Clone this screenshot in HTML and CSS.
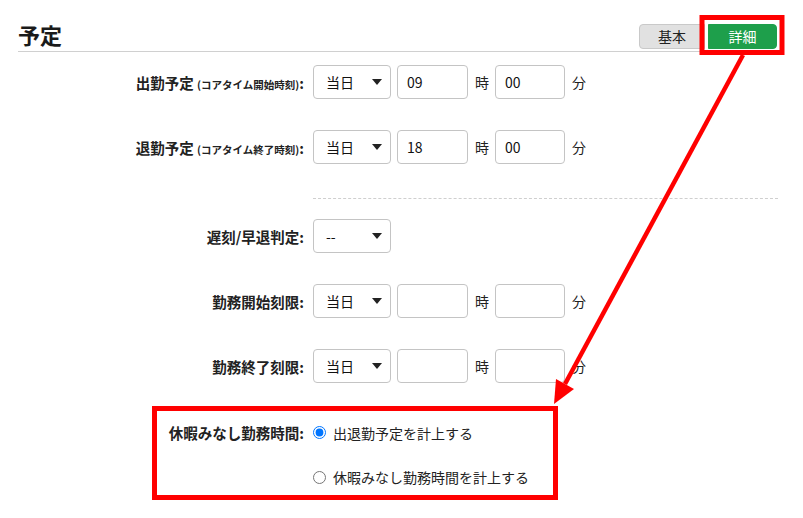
FILE: index.html
```html
<!DOCTYPE html>
<html lang="ja">
<head>
<meta charset="utf-8">
<link rel="stylesheet" href="styles.css">
</head>
<body>
<div class="page">
  <div class="header">
    <h1 class="title">予定</h1>
    <div class="toggle">
      <button class="tbtn tbtn-basic">基本</button>
      <button class="tbtn tbtn-detail">詳細</button>
    </div>
  </div>

  <div class="form">
    <div class="row first">
      <div class="label">出勤予定 <small>(コアタイム開始時刻)</small>:</div>
      <div class="controls">
        <div class="select"><span>当日</span><span class="caret"></span></div>
        <input class="num" type="text" value="09">
        <span class="unit">時</span>
        <input class="num num2" type="text" value="00">
        <span class="unit">分</span>
      </div>
    </div>

    <div class="row">
      <div class="label">退勤予定 <small>(コアタイム終了時刻)</small>:</div>
      <div class="controls">
        <div class="select"><span>当日</span><span class="caret"></span></div>
        <input class="num" type="text" value="18">
        <span class="unit">時</span>
        <input class="num num2" type="text" value="00">
        <span class="unit">分</span>
      </div>
    </div>

    <div class="divider-row">
      <div></div>
      <div class="divider"></div>
    </div>

    <div class="row after-divider">
      <div class="label">遅刻/早退判定:</div>
      <div class="controls">
        <div class="select"><span>--</span><span class="caret"></span></div>
      </div>
    </div>

    <div class="row">
      <div class="label">勤務開始刻限:</div>
      <div class="controls">
        <div class="select"><span>当日</span><span class="caret"></span></div>
        <input class="num" type="text" value="">
        <span class="unit">時</span>
        <input class="num num2" type="text" value="">
        <span class="unit">分</span>
      </div>
    </div>

    <div class="row">
      <div class="label">勤務終了刻限:</div>
      <div class="controls">
        <div class="select"><span>当日</span><span class="caret"></span></div>
        <input class="num" type="text" value="">
        <span class="unit">時</span>
        <input class="num num2" type="text" value="">
        <span class="unit">分</span>
      </div>
    </div>

    <div class="radio-row first-radio">
      <div class="label">休暇みなし勤務時間:</div>
      <label class="radio"><input type="radio" name="mode" checked><span>出退勤予定を計上する</span></label>
    </div>
    <div class="radio-row second-radio">
      <div></div>
      <label class="radio"><input type="radio" name="mode"><span>休暇みなし勤務時間を計上する</span></label>
    </div>
  </div>
</div>

<svg class="annot" width="803" height="518" viewBox="0 0 803 518">
  <rect x="702" y="17.5" width="80" height="35" fill="none" stroke="#ff0000" stroke-width="5"/>
  <rect x="154.5" y="408.5" width="401" height="89" fill="none" stroke="#ff0000" stroke-width="5"/>
  <line x1="743" y1="55" x2="565" y2="384" stroke="#ff0000" stroke-width="4.5"/>
  <polygon points="554,404 556,379 574,389" fill="#ff0000"/>
</svg>
</body>
</html>
```

FILE: styles.css
```css
html, body {
  margin: 0;
  padding: 0;
  background: #ffffff;
}
body {
  font-family: "Noto Sans CJK JP", "Noto Sans", sans-serif;
  color: #222222;
  width: 803px;
  height: 518px;
  overflow: hidden;
  position: relative;
}
.page {
  margin-left: 18px;
  width: 762px;
}
.header {
  box-sizing: border-box;
  height: 52px;
  padding-top: 20px;
  border-bottom: 1px solid #d0d0d0;
  display: flex;
  align-items: center;
  justify-content: space-between;
}
.title {
  margin: -3px 0 0 0;
  font-size: 22px;
  font-weight: bold;
  line-height: 1;
  color: #1a1a1a;
}
.toggle {
  display: flex;
  align-items: center;
  gap: 3px;
  margin-right: 3px;
  margin-top: 1px;
}
.tbtn {
  font-family: "Noto Sans CJK JP", sans-serif;
  font-size: 14px;
  height: 25px;
  line-height: 23px;
  padding: 0;
  margin: 0;
  border: 1px solid #c9c9c9;
}
.tbtn-basic {
  width: 66px;
  background: #e1e1e1;
  color: #222;
  border-radius: 4px 0 0 4px;
}
.tbtn-detail {
  width: 69px;
  background: #1e9f4b;
  border-color: #1e9f4b;
  color: #ffffff;
  border-radius: 0 4px 4px 0;
}
.form {
  display: flex;
  flex-direction: column;
}
.row, .radio-row, .divider-row {
  display: grid;
  grid-template-columns: 286px 1fr;
  column-gap: 9px;
  align-items: center;
}
.row {
  height: 34px;
  margin-top: 31px;
}
.row.first {
  margin-top: 13px;
}
.label {
  text-align: right;
  font-weight: bold;
  font-size: 14.5px;
  color: #222;
  white-space: nowrap;
}
.label small {
  font-size: 10.5px;
  font-weight: bold;
}
.controls {
  display: flex;
  align-items: center;
}
.select {
  box-sizing: border-box;
  width: 78px;
  height: 34px;
  border: 1px solid #c4c4c4;
  border-radius: 4px;
  display: flex;
  align-items: center;
  justify-content: space-between;
  padding: 0 8px 0 12px;
  font-size: 14px;
  color: #111;
}
.caret {
  width: 0;
  height: 0;
  border-left: 5px solid transparent;
  border-right: 5px solid transparent;
  border-top: 6px solid #222;
}
.num {
  box-sizing: border-box;
  width: 71px;
  height: 34px;
  margin: 0 0 0 6px;
  border: 1px solid #c4c4c4;
  border-radius: 4px;
  padding: 0 9px;
  font-family: "Noto Sans CJK JP", sans-serif;
  font-size: 14px;
  color: #111;
  outline: none;
}
.num2 {
  width: 70px;
}
.unit {
  font-size: 14px;
  margin-left: 7px;
  color: #222;
}
.divider-row {
  height: 1px;
  margin-top: 34px;
}
.divider {
  border-top: 1px dashed #cfcfcf;
  margin-right: 2px;
}
.row.after-divider {
  margin-top: 20px;
}
.radio-row {
  height: 20px;
}
.first-radio {
  margin-top: 39px;
}
.second-radio {
  margin-top: 25px;
}
.radio {
  display: flex;
  align-items: center;
  font-size: 14px;
  color: #222;
}
.radio input {
  margin: 0 7px 0 0;
  width: 13px;
  height: 13px;
}
.annot {
  position: absolute;
  left: 0;
  top: 0;
  pointer-events: none;
}
```
